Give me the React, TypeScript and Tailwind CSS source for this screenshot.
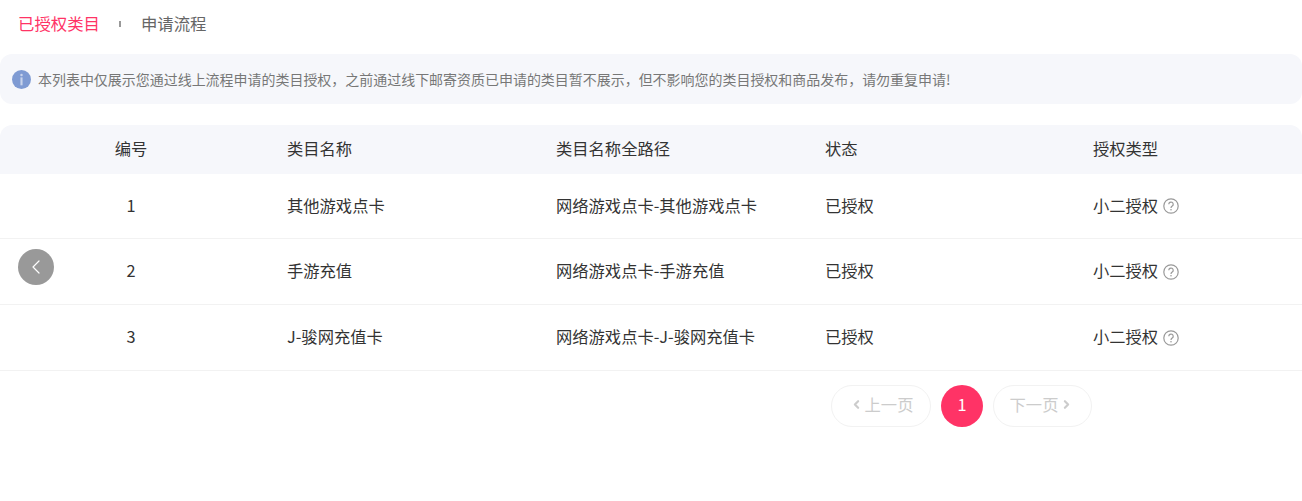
import { ChevronLeft, ChevronRight } from "lucide-react";

const rows = [
    { id: 1, name: "其他游戏点卡", path: "网络游戏点卡-其他游戏点卡", height: "h-[65px]" },
    { id: 2, name: "手游充值", path: "网络游戏点卡-手游充值", height: "h-[66px]" },
    { id: 3, name: "J-骏网充值卡", path: "网络游戏点卡-J-骏网充值卡", height: "h-[66px]" },
];

const gridCols = "grid grid-cols-[262px_269px_269px_268px_1fr]";

function InfoIcon() {
    return (
        <svg viewBox="0 0 18 18" className="h-[19px] w-[19px] shrink-0">
            <circle cx={9} cy={9} r={9} fill="#7f9bd3" />
            <circle cx={9} cy={4.8} r={1.2} fill="#c9d4ec" />
            <rect x={8} y={7} width={2} height={7.5} fill="#c9d4ec" />
        </svg>
    );
}

function HelpIcon() {
    return (
        <svg viewBox="0 0 16 16" className="mt-[2px] h-4 w-4 shrink-0" fill="none" stroke="#999">
            <circle cx={8} cy={8} r={7.2} strokeWidth={1.2} />
            <path d="M5.8 6.3a2.2 2.2 0 1 1 3.4 1.8c-.8.5-1.2 1-1.2 1.9" strokeWidth={1.2} />
            <circle cx={8} cy={11.8} r={0.8} fill="#999" stroke="none" />
        </svg>
    );
}

function App() {
    return (
        <div className="relative h-[501px] w-[1302px] overflow-hidden bg-white font-['Noto_Sans_CJK_SC','Noto_Sans',sans-serif] text-[#333]">
            <div className="flex h-[54px] items-start pl-[18px] pt-[13px] text-[16.4px] leading-5">
                <span className="text-[#ff3366]">已授权类目</span>
                <span className="ml-[19px] mr-[20px] mt-[8px] h-[6px] w-[2px] bg-[#999]" />
                <span className="text-[#666]">申请流程</span>
            </div>

            <div className="flex h-[50px] items-center gap-[7px] rounded-xl bg-[#f6f7fb] pl-[12px] text-[13.97px] text-[#777]">
                <InfoIcon />
                <span>
                    本列表中仅展示您通过线上流程申请的类目授权，之前通过线下邮寄资质已申请的类目暂不展示，但不影响您的类目授权和商品发布，请勿重复申请!
                </span>
            </div>

            <div className={`${gridCols} mt-[21px] h-[49px] items-center rounded-t-xl bg-[#f6f7fb] pb-[2px] text-[16.3px]`}>
                <div className="text-center">编号</div>
                <div className="pl-[25px]">类目名称</div>
                <div className="pl-[25px]">类目名称全路径</div>
                <div className="pl-[25px]">状态</div>
                <div className="pl-[25px]">授权类型</div>
            </div>

            {rows.map((row) => (
                <div
                    key={row.id}
                    className={`${gridCols} ${row.height} items-center border-b border-[#f2f2f2] pb-[2px] text-[16.3px]`}
                >
                    <div className="text-center">{row.id}</div>
                    <div className="pl-[25px]">{row.name}</div>
                    <div className="pl-[25px]">{row.path}</div>
                    <div className="pl-[25px]">已授权</div>
                    <div className="flex items-center gap-[5px] pl-[25px]">
                        小二授权
                        <HelpIcon />
                    </div>
                </div>
            ))}

            <div className="mt-[14px] flex gap-[10px] pl-[831px] text-[16.3px] text-[#ccc]">
                <button className="flex h-[42px] w-[100px] items-center justify-center rounded-full border border-[#f2f2f2] pb-[3px] pl-[1px]">
                    <ChevronLeft size={13} strokeWidth={4} />
                    <span className="ml-[2px]">上一页</span>
                </button>
                <button className="h-[42px] w-[42px] rounded-full bg-[#ff3366] pb-[3px] text-white">1</button>
                <button className="flex h-[42px] w-[99px] items-center justify-center rounded-full border border-[#f2f2f2] pb-[3px] pr-[2px]">
                    <span className="mr-[2px]">下一页</span>
                    <ChevronRight size={13} strokeWidth={4} />
                </button>
            </div>

            {/* floating back button sits over the table */}
            <button className="absolute left-[18px] top-[249px] flex h-9 w-9 items-center justify-center rounded-full bg-[#999] text-white">
                <ChevronLeft size={24} strokeWidth={1.2} />
            </button>
        </div>
    );
}

export default App;
